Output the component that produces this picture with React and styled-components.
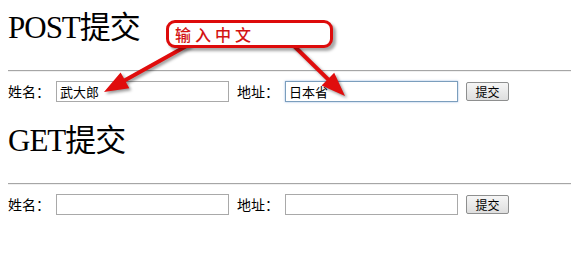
import React from 'react'
import styled, { createGlobalStyle } from 'styled-components'

const GlobalStyle = createGlobalStyle`
    html, body {
        margin: 0;
        padding: 0;
        background: #ffffff;
    }
    body {
        font-family: "Noto Sans CJK SC", "Liberation Sans", sans-serif;
        color: #000000;
        overflow: hidden;
    }
`

const Page = styled.div`
    position: relative;
    width: 571px;
    height: 256px;
    padding: 10px 0 0 8px;
    box-sizing: border-box;
`

const Section = styled.form`
    display: flex;
    flex-direction: column;
    margin: 0 0 21px 0;
`

const Title = styled.h1`
    margin: 0 0 24px 0;
    font-family: "Liberation Serif", "Noto Sans CJK SC", serif;
    font-size: 31px;
    font-weight: 400;
    line-height: 36px;
    letter-spacing: -1px;
`

const Rule = styled.hr`
    margin: 0 0 9px 0;
    height: 0;
    border: 0;
    border-top: 1px solid #a6a6a6;
    border-bottom: 1px solid #f0f0f0;
`

const Row = styled.div`
    display: flex;
    align-items: center;
    gap: 8px;
    height: 21px;
`

const Field = styled.label`
    display: flex;
    align-items: center;
    gap: 6px;
    font-size: 14px;
    line-height: 21px;
`

const TextInput = styled.input`
    box-sizing: border-box;
    width: 173px;
    height: 21px;
    margin: 0;
    padding: 0 3px;
    font-family: "Noto Sans CJK SC", "Liberation Sans", sans-serif;
    font-size: 13px;
    color: #000;
    background: #fff;
    outline: none;
    border: 1px solid ${(p) => (p.$focused ? '#7b9ebd' : '#a9a9a9')};
    box-shadow: ${(p) => (p.$focused ? '0 0 2px rgba(90, 140, 210, 0.6)' : 'none')};
`

const SubmitButton = styled.button`
    box-sizing: border-box;
    width: 43px;
    height: 19px;
    margin: 0;
    padding: 0;
    font-family: "Noto Sans CJK SC", sans-serif;
    font-size: 12px;
    line-height: 17px;
    color: #000;
    border: 1px solid #8e8f8f;
    border-radius: 2px;
    background: linear-gradient(#f6f6f6, #dedede);
`

const Overlay = styled.svg`
    position: absolute;
    left: 0;
    top: 0;
    pointer-events: none;
    filter: drop-shadow(2px 2px 1.5px rgba(0, 0, 0, 0.4));
`

const Callout = styled.div`
    position: absolute;
    left: 166px;
    top: 20px;
    width: 167px;
    height: 28px;
    box-sizing: border-box;
    padding-left: 6px;
    border: 3px solid #dd0b0b;
    border-radius: 9px;
    background: #ffffff;
    box-shadow: 3px 3px 3px rgba(0, 0, 0, 0.35);
    color: #d31313;
    font-size: 16px;
    font-weight: 500;
    line-height: 22px;
    letter-spacing: 4px;
`

function arrowPoints(x1, y1, x2, y2) {
    const dx = x2 - x1
    const dy = y2 - y1
    const len = Math.hypot(dx, dy)
    const ux = dx / len
    const uy = dy / len
    const nx = -uy
    const ny = ux
    const head = 24
    const hw = 9
    const sw = 2
    const bx = x2 - ux * head
    const by = y2 - uy * head
    const pts = [
        [x1 + nx * sw, y1 + ny * sw],
        [bx + nx * sw, by + ny * sw],
        [bx + nx * hw, by + ny * hw],
        [x2, y2],
        [bx - nx * hw, by - ny * hw],
        [bx - nx * sw, by - ny * sw],
        [x1 - nx * sw, y1 - ny * sw],
    ]
    return pts.map((p) => p[0].toFixed(1) + ',' + p[1].toFixed(1)).join(' ')
}

const arrows = [
    { from: [190, 44], to: [104, 92] },
    { from: [292, 44], to: [345, 96] },
]

function FormBlock({ title, name, address, focused }) {
    return (
        <Section onSubmit={(e) => e.preventDefault()}>
            <Title>{title}</Title>
            <Rule />
            <Row>
                <Field>
                    姓名：
                    <TextInput type="text" defaultValue={name} />
                </Field>
                <Field>
                    地址：
                    <TextInput type="text" defaultValue={address} $focused={focused} />
                </Field>
                <SubmitButton type="submit">提交</SubmitButton>
            </Row>
        </Section>
    )
}

const App = () => {
    return (
        <Page>
            <GlobalStyle />
            <FormBlock title="POST提交" name="武大郎" address="日本省" focused />
            <FormBlock title="GET提交" name="" address="" />

            <Overlay width="571" height="256" viewBox="0 0 571 256">
                {arrows.map((a, i) => (
                    <polygon
                        key={i}
                        points={arrowPoints(a.from[0], a.from[1], a.to[0], a.to[1])}
                        fill="#e00d0d"
                    />
                ))}
            </Overlay>
            <Callout>输入中文</Callout>
        </Page>
    )
}

export default App
